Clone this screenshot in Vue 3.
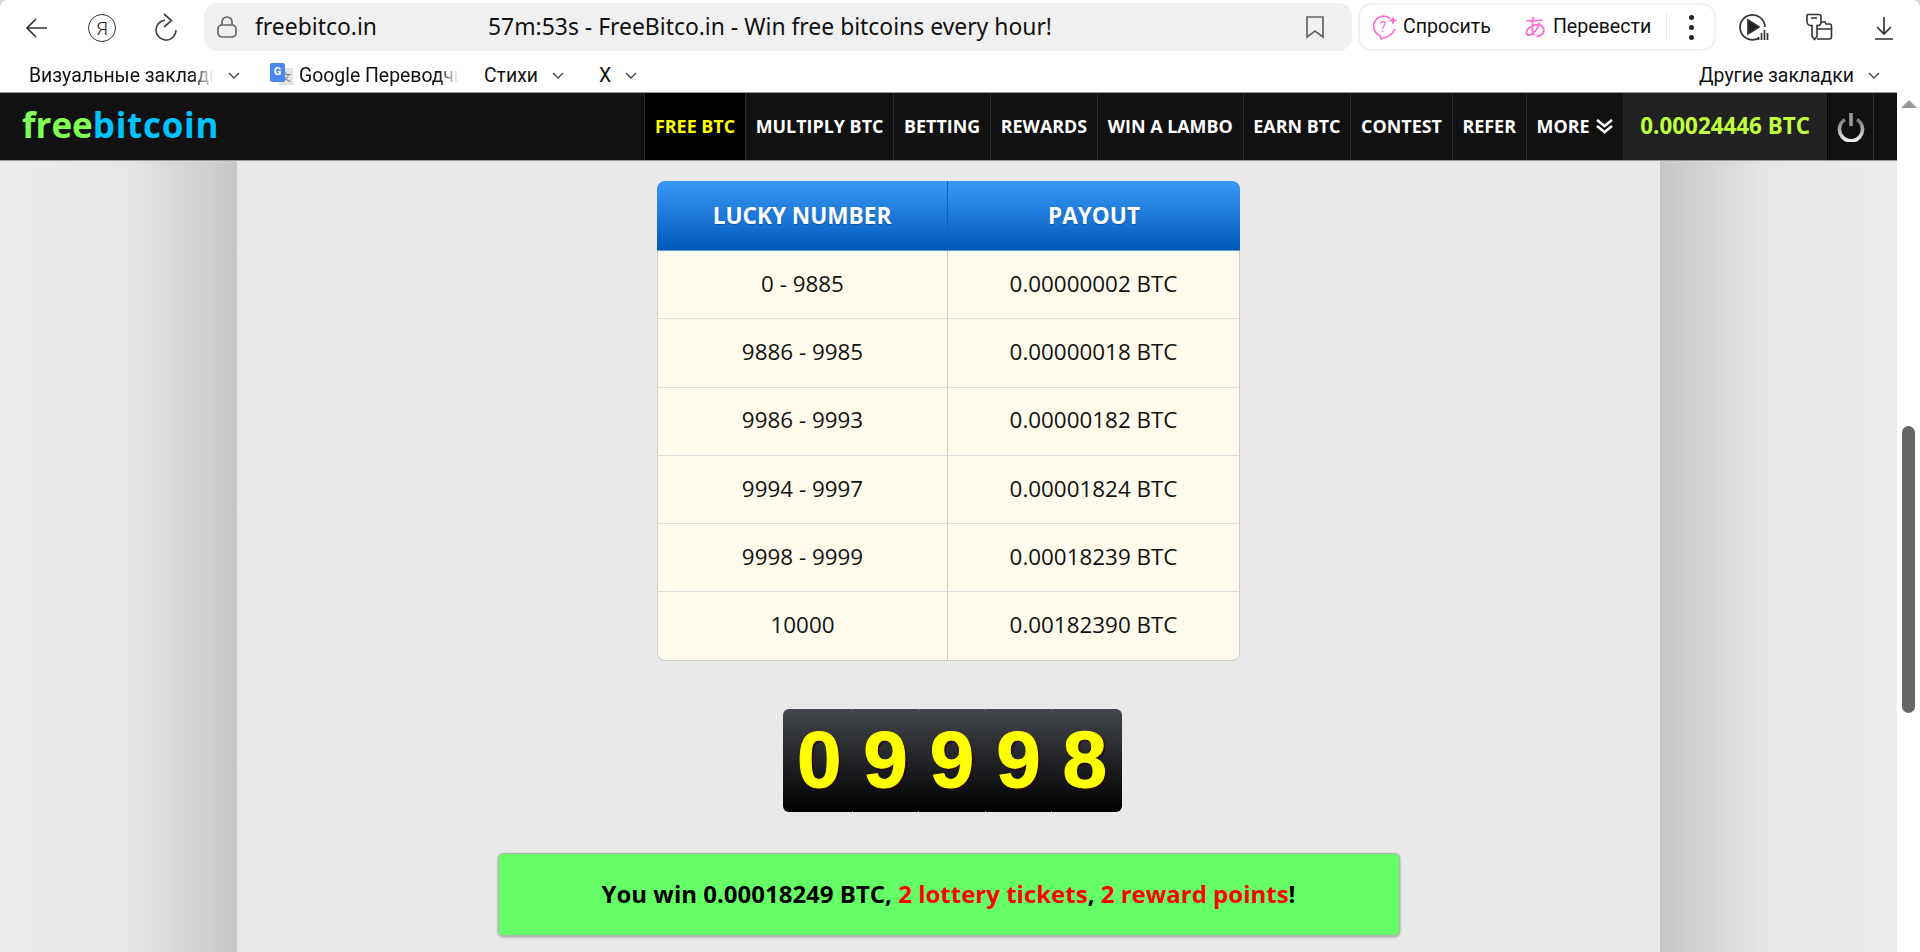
<template>
  <div class="page">
    <header class="browser">
      <div class="toolbar">
        <svg class="ico back" width="24" height="24" viewBox="0 0 24 24"><path d="M22 12H3M11 3l-9 9 9 9" /></svg>
        <div class="ya">Я</div>
        <svg class="ico reload" width="24" height="28" viewBox="0 0 24 28"><path d="M11 7.100A10 10 0 1 0 22 17" /><path d="M10 1l7.500 6.500L10 14" /></svg>
        <div class="address">
          <svg class="ico lock" width="22" height="24" viewBox="0 0 22 24"><rect x="2" y="10" width="18" height="12" rx="4" /><path d="M6 10V7a5 5 0 0 1 10 0v3" /></svg>
          <span class="domain">freebitco.in</span>
          <span class="title">57m:53s - FreeBitco.in - Win free bitcoins every hour!</span>
          <svg class="ico mark" width="20" height="24" viewBox="0 0 20 24"><path d="M2 2h16v20l-8-6-8 6z" /></svg>
        </div>
        <div class="tools">
          <svg class="pink-ico" width="25" height="25" viewBox="0 0 25 25">
            <path d="M17 3.500A10 10 0 1 0 7 20.500l1 3.500c6-1.500 12-5 14-10" />
            <text x="6.500" y="17" class="q">?</text>
            <path class="star" d="M20 1l1.200 3.300L24.500 5.500l-3.300 1.200L20 10l-1.200-3.300-3.300-1.200 3.300-1.200z" />
          </svg>
          <span class="tool-text ask">Спросить</span>
          <span class="kana">あ</span>
          <span class="tool-text">Перевести</span>
          <i class="sep"></i>
          <span class="dots"><i></i><i></i><i></i></span>
        </div>
        <svg class="ico play" width="30" height="28" viewBox="0 0 30 28">
          <path d="M20 25a12.500 12.500 0 1 1 6-11" />
          <path class="solid" d="M9 7l11 7-11 7z" />
          <path d="M19.500 27v-3M22.500 27v-7M25.500 27v-10M28.500 27v-7" />
        </svg>
        <svg class="ico keys" width="28" height="28" viewBox="0 0 28 28">
          <path d="M3 1.500h11a2 2 0 0 1 2 2v6a3 3 0 0 1-3 3h-1v11l-2.500 3-2.500-3v-11H6a4 4 0 0 1-4-4v-6a1 1 0 0 1 1-1z" />
          <path d="M6 5h6M16 9h4l1 2h4a2 2 0 0 1 1.500 2v11a2 2 0 0 1-2 2H12M12 16h15" />
        </svg>
        <svg class="ico down" width="20" height="24" viewBox="0 0 20 24"><path d="M10 1v17M3 11l7 7 7-7M1 23h18" /></svg>
      </div>
      <div class="bookmarks">
        <span class="bm fade first">Визуальные закладки</span>
        <svg class="chev" width="12" height="8" viewBox="0 0 12 8"><path d="M1 1l5 5 5-5" /></svg>
        <span class="gt"><i class="gt-blue">G</i><i class="gt-grey">文</i></span>
        <span class="bm fade second">Google Переводчик</span>
        <span class="bm">Стихи</span>
        <svg class="chev" width="12" height="8" viewBox="0 0 12 8"><path d="M1 1l5 5 5-5" /></svg>
        <span class="bm x">X</span>
        <svg class="chev" width="12" height="8" viewBox="0 0 12 8"><path d="M1 1l5 5 5-5" /></svg>
        <span class="bm others">Другие закладки</span>
        <svg class="chev" width="12" height="8" viewBox="0 0 12 8"><path d="M1 1l5 5 5-5" /></svg>
      </div>
    </header>

    <div class="viewport">
      <div class="site">
        <nav class="nav">
          <div class="logo"><span class="free">free</span><span class="bit">bitcoin</span></div>
          <a v-for="item in menu" :key="item" class="nav-item" :class="{ active: item === 'FREE BTC' }">{{ item }}</a>
          <a class="nav-item more">
            MORE
            <svg width="19" height="16" viewBox="0 0 19 16"><path d="M2 2l7.500 6L17 2M2 8l7.500 6L17 8" /></svg>
          </a>
          <div class="balance">{{ balance }} BTC</div>
          <div class="power">
            <svg width="28" height="30" viewBox="0 0 28 30">
              <defs>
                <linearGradient id="pw" x1="0" y1="0" x2="0" y2="1">
                  <stop offset="0" stop-color="#777" />
                  <stop offset="1" stop-color="#eee" />
                </linearGradient>
              </defs>
              <path d="M8 7.500a11.500 11.500 0 1 0 12 0" stroke="url(#pw)" />
              <path d="M14 1v13" stroke="#999" />
            </svg>
          </div>
          <div class="nav-tail"></div>
        </nav>

        <div class="backdrop">
          <div class="gutter left"></div>
          <main class="content">
            <table class="payouts">
              <thead>
                <tr><th>LUCKY NUMBER</th><th>PAYOUT</th></tr>
              </thead>
              <tbody>
                <tr v-for="row in rows" :key="row.range">
                  <td>{{ row.range }}</td>
                  <td>{{ row.payout }} BTC</td>
                </tr>
              </tbody>
            </table>

            <div class="counter">
              <div v-for="(digit, i) in digits" :key="i" class="digit">{{ digit }}</div>
            </div>

            <div class="win">
              You win 0.00018249 BTC, <span class="red">2 lottery tickets</span>, <span class="red">2 reward points</span>!
            </div>
          </main>
          <div class="gutter right"></div>
        </div>
      </div>

      <aside class="scrollbar">
        <i class="arrow"></i>
        <div class="thumb"></div>
      </aside>
    </div>
  </div>
</template>

<script setup>
const menu = ['FREE BTC', 'MULTIPLY BTC', 'BETTING', 'REWARDS', 'WIN A LAMBO', 'EARN BTC', 'CONTEST', 'REFER']
const balance = '0.00024446'
const digits = ['0', '9', '9', '9', '8']

const rows = [
  { range: '0 - 9885', payout: '0.00000002' },
  { range: '9886 - 9985', payout: '0.00000018' },
  { range: '9986 - 9993', payout: '0.00000182' },
  { range: '9994 - 9997', payout: '0.00001824' },
  { range: '9998 - 9999', payout: '0.00018239' },
  { range: '10000', payout: '0.00182390' }
]
</script>

<style>
html, body {
  margin: 0;
  background: #d8d8d8;
  overflow: hidden;
}
</style>

<style scoped>
.page {
  width: 1920px;
  height: 952px;
  display: flex;
  flex-direction: column;
  overflow: hidden;
  background: #fff;
  border-radius: 8px 8px 0 0;
}

/* browser chrome */
.browser {
  height: 92px;
  flex: none;
  font-family: Roboto, "Noto Sans", sans-serif;
  color: #111;
}

.toolbar {
  height: 54px;
  padding: 3px 0 0 25px;
  box-sizing: border-box;
  display: flex;
  align-items: flex-start;
}

.ico {
  flex: none;
  fill: none;
  stroke: #333;
  stroke-width: 1.7;
}

.ico.back {
  margin-top: 13px;
}

.ya {
  width: 26px;
  height: 26px;
  margin: 11px 0 0 39px;
  border: 1.6px solid #333;
  border-radius: 50%;
  display: flex;
  align-items: center;
  justify-content: center;
  font-size: 19px;
  font-weight: 300;
  color: #222;
  flex: none;
}

.ico.reload {
  margin: 10px 0 0 38px;
  stroke: #444;
}

.address {
  width: 1148px;
  height: 48px;
  margin-left: 26px;
  background: #f0f0f0;
  border-radius: 14px;
  display: flex;
  align-items: center;
  flex: none;
  position: relative;
  font-family: "Noto Sans", Roboto, sans-serif;
}

.ico.lock {
  margin-left: 12px;
  stroke: #666;
}

.domain {
  margin-left: 17px;
  padding-bottom: 2px;
  width: 233px;
  font-size: 22.900px;
  flex: none;
}

.title {
  padding-bottom: 2px;
  font-size: 22.900px;
  flex: 1;
  white-space: nowrap;
}

.ico.mark {
  margin-right: 27px;
  stroke: #666;
}

.tools {
  width: 358px;
  height: 48px;
  margin-left: 6px;
  box-sizing: border-box;
  border: 2px solid #f0f0f0;
  border-radius: 14px;
  display: flex;
  align-items: center;
  padding-left: 13px;
  flex: none;
}

.pink-ico {
  fill: none;
  stroke: #ff6fd0;
  stroke-width: 1.8;
  flex: none;
}

.pink-ico .q {
  font: 400 14px Roboto, sans-serif;
  fill: #ff6fd0;
  stroke: none;
}

.pink-ico .star {
  fill: #ff6fd0;
  stroke: none;
}

.tool-text {
  font-size: 19.600px;
  margin: 0 0 2px 6px;
  white-space: nowrap;
}

.tool-text.ask {
  margin-left: 5px;
}

.kana {
  margin: 0 0 3px 32px;
  font: 24px "Noto Sans CJK JP", sans-serif;
  color: #ff6fd0;
  line-height: 1;
}

.sep {
  width: 1px;
  height: 26px;
  background: #e4e4e4;
  margin-left: 15px;
}

.dots {
  display: flex;
  flex-direction: column;
  gap: 5px;
  margin-left: 22px;
}

.dots i {
  width: 5px;
  height: 5px;
  border-radius: 50%;
  background: #222;
}

.ico.play {
  margin: 10px 0 0 23px;
}

.ico.play .solid {
  fill: #222;
}

.ico.keys {
  margin: 10px 0 0 36px;
  stroke-width: 1.6;
}

.ico.down {
  margin: 13px 0 0 41px;
}

.bookmarks {
  height: 38px;
  display: flex;
  align-items: center;
  padding: 4px 26px 0 29px;
  font-size: 19.400px;
  box-sizing: border-box;
}

.bm {
  white-space: nowrap;
  flex: none;
}

.bm.x {
  margin-left: 21px;
}

.fade {
  overflow: hidden;
  -webkit-mask-image: linear-gradient(to right, #000 88%, transparent);
  mask-image: linear-gradient(to right, #000 88%, transparent);
}

.first {
  width: 185px;
}

.second {
  width: 159px;
  margin-left: 6px;
  margin-right: 26px;
}

.chev {
  flex: none;
  margin: 2px 14px 0 14px;
  fill: none;
  stroke: #444;
  stroke-width: 1.4;
}

.gt {
  position: relative;
  width: 23px;
  height: 24px;
  margin-left: 16px;
  flex: none;
}

.gt-blue {
  position: absolute;
  left: 0;
  top: 0;
  width: 15px;
  height: 19px;
  background: #4a86f0;
  border-radius: 2px;
  color: #fff;
  font: 700 11px/18px Roboto, sans-serif;
  text-align: center;
  z-index: 1;
}

.gt-grey {
  position: absolute;
  right: 0;
  top: 5px;
  width: 14px;
  height: 17px;
  background: #e2e2e2;
  color: #777;
  font: 10px/17px "Noto Sans CJK SC", sans-serif;
  text-align: center;
}

.others {
  margin-left: auto;
}

/* site */
.viewport {
  flex: 1;
  min-height: 0;
  display: flex;
}

.site {
  flex: 1;
  min-width: 0;
  display: flex;
  flex-direction: column;
  font-family: "Open Sans", sans-serif;
}

.nav {
  height: 69px;
  flex: none;
  box-sizing: border-box;
  background: #111;
  border-top: 1px solid #999;
  border-bottom: 1px solid #999;
  display: flex;
  align-items: stretch;
  color: #fff;
}

.logo {
  margin: 0 auto 0 22px;
  align-self: center;
  font-size: 35px;
  font-weight: 700;
  line-height: 1;
  padding-bottom: 4px;
}

.free {
  color: #80ff55;
}

.bit {
  color: #00c2ff;
  letter-spacing: 0.7px;
}

.nav-item {
  display: flex;
  align-items: center;
  gap: 5px;
  padding: 0 9.800px 2px;
  font-size: 17.900px;
  font-weight: 700;
  white-space: nowrap;
  border-left: 1px solid #2b2b2b;
}

.nav-item.active {
  background: #000;
  color: #ff0;
}

.nav-item.more svg {
  fill: none;
  stroke: #fff;
  stroke-width: 2.6;
}

.balance {
  display: flex;
  align-items: center;
  padding: 0 17px 3px;
  background: #222;
  color: #c0ff40;
  font-size: 22.400px;
  font-weight: 700;
  white-space: nowrap;
}

.power {
  width: 47px;
  display: flex;
  align-items: center;
  justify-content: center;
  border-left: 1px solid #000;
  border-right: 1px solid #333;
  box-sizing: border-box;
}

.power svg {
  fill: none;
  stroke-width: 3.6;
}

.nav-tail {
  width: 23px;
}

.backdrop {
  flex: 1;
  min-height: 0;
  display: flex;
  background: #e9e9e9;
}

.gutter {
  width: 237px;
  flex: none;
}

.gutter.left {
  background: linear-gradient(to right, #ececec, #e6e6e6 55%, #c6c6c6);
}

.gutter.right {
  background: linear-gradient(to left, #ececec, #e6e6e6 55%, #c6c6c6);
}

.content {
  flex: 1;
  min-width: 0;
  padding-top: 20px;
  display: flex;
  flex-direction: column;
  align-items: center;
}

.payouts {
  width: 583px;
  border-collapse: separate;
  border-spacing: 0;
  table-layout: fixed;
  font-size: 22.400px;
  color: #111;
  flex: none;
}

.payouts th {
  height: 70px;
  padding: 0;
  box-sizing: border-box;
  background: linear-gradient(#3a98f8, #0059b6);
  color: #fff;
  font-size: 22.600px;
  font-weight: 700;
  text-shadow: 0 1px 1px rgba(0, 0, 0, 0.25);
  border-bottom: 1px solid #5a9ad8;
}

.payouts th:first-child {
  width: 291px;
  border-radius: 8px 0 0 0;
  border-right: 1px solid #0b62bb;
}

.payouts th:last-child {
  border-radius: 0 8px 0 0;
}

.payouts td {
  height: 68.300px;
  padding: 0 0 3px;
  box-sizing: border-box;
  background: #fefbec;
  text-align: center;
  border-bottom: 1px solid #ddd;
}

.payouts td:first-child {
  border-left: 1px solid #ccc;
  border-right: 1px solid #c8c8c8;
}

.payouts td:last-child {
  border-right: 1px solid #ccc;
}

.payouts tr:last-child td {
  border-bottom-color: #ccc;
}

.payouts tr:last-child td:first-child {
  border-radius: 0 0 0 8px;
}

.payouts tr:last-child td:last-child {
  border-radius: 0 0 8px 0;
}

.counter {
  width: 339px;
  height: 103px;
  margin: 48px 0 0 7px;
  padding: 0 4px;
  box-sizing: border-box;
  flex: none;
  display: flex;
  border-radius: 6px;
  overflow: hidden;
  background: linear-gradient(#43464c, #000);
  font-family: "Liberation Sans", Arial, sans-serif;
}

.digit {
  flex: 1;
  display: flex;
  align-items: center;
  justify-content: center;
  font-size: 80px;
  font-weight: 700;
  color: #ff0;
  -webkit-text-stroke: 1px #ff0;
  text-shadow: 2px 2px 1px #2a0a0a;
}

.digit + .digit {
  border-left: 1px solid;
  border-image: linear-gradient(#999 2px, transparent 2px, transparent calc(100% - 2px), #999 calc(100% - 2px)) 1;
}

.win {
  width: 902px;
  height: 83px;
  margin-top: 41px;
  flex: none;
  box-sizing: border-box;
  background: #66fe66;
  border: 1px solid #b5b5b5;
  border-radius: 5px;
  box-shadow: 0 1px 3px rgba(0, 0, 0, 0.35);
  text-align: center;
  line-height: 79px;
  white-space: pre-wrap;
  font-size: 24px;
  font-weight: 700;
  color: #000;
}

.red {
  color: #f00;
}

.scrollbar {
  width: 23px;
  flex: none;
  background: #fff;
  display: flex;
  flex-direction: column;
  align-items: center;
  padding-top: 8px;
  box-sizing: border-box;
}

.arrow {
  width: 0;
  height: 0;
  border-left: 8px solid transparent;
  border-right: 8px solid transparent;
  border-bottom: 8px solid #999;
  flex: none;
}

.thumb {
  width: 13px;
  height: 287px;
  margin-top: 318px;
  background: #666;
  border-radius: 7px;
  flex: none;
}
</style>
